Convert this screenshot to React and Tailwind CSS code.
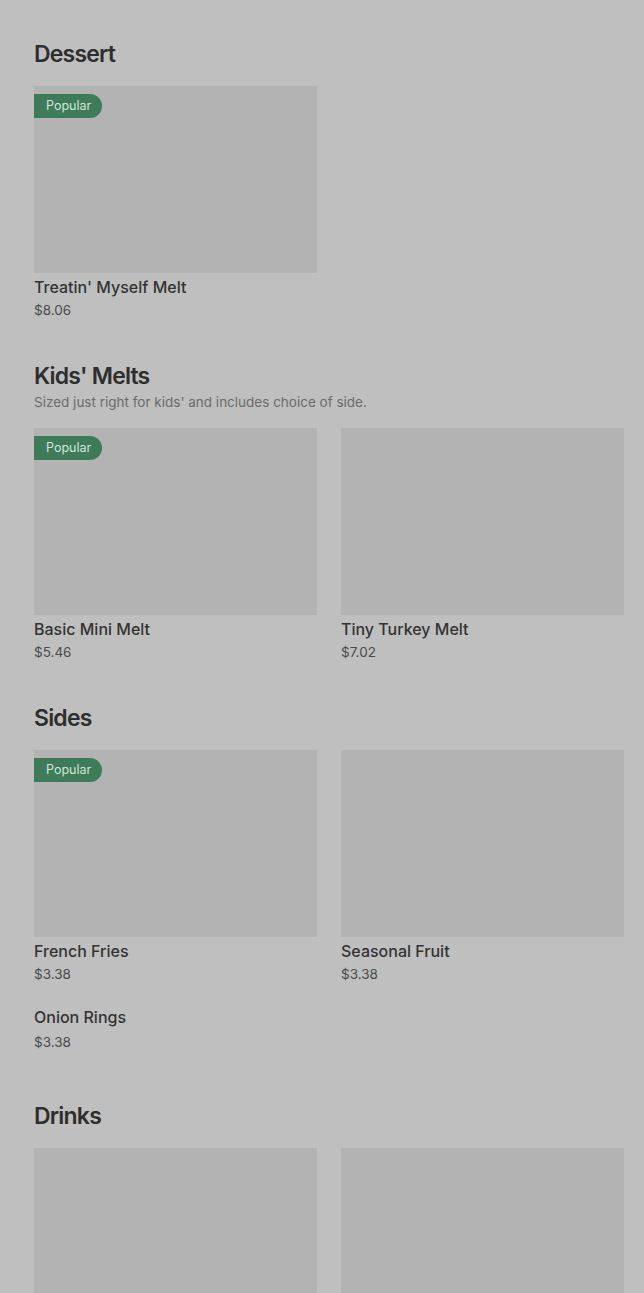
import React from "react";

const sections = [
  {
    title: "Dessert",
    items: [{ name: "Treatin' Myself Melt", price: "$8.06", popular: true, image: true }],
  },
  {
    title: "Kids' Melts",
    desc: "Sized just right for kids' and includes choice of side.",
    items: [
      { name: "Basic Mini Melt", price: "$5.46", popular: true, image: true },
      { name: "Tiny Turkey Melt", price: "$7.02", image: true },
    ],
  },
  {
    title: "Sides",
    items: [
      { name: "French Fries", price: "$3.38", popular: true, image: true },
      { name: "Seasonal Fruit", price: "$3.38", image: true },
      { name: "Onion Rings", price: "$3.38" },
    ],
  },
  {
    title: "Drinks",
    items: [
      { name: "", price: "", image: true },
      { name: "", price: "", image: true },
    ],
  },
];

function Item({ item }) {
  if (!item.image) {
    return (
      <div className="pt-[5px] pb-2">
        <div className="text-[16px] leading-6 font-medium text-[#333333]">{item.name}</div>
        <div className="mt-[3px] text-[13.5px] leading-5 text-[#4a4a4a]">{item.price}</div>
      </div>
    );
  }
  return (
    <div>
      <div className="relative h-[187px] bg-[#b3b3b3]">
        {item.popular && (
          <div className="absolute left-0 top-2 h-6 w-[68px] rounded-r-full bg-[#3d7b59] pl-3 text-[12.5px] leading-6 text-[#d3e6da]">
            Popular
          </div>
        )}
      </div>
      {item.name && (
        <>
          <div className="mt-[2px] text-[16px] leading-6 font-medium text-[#333333]">{item.name}</div>
          <div className="mt-[1px] text-[13.5px] leading-5 text-[#4a4a4a]">{item.price}</div>
        </>
      )}
    </div>
  );
}

export default function App() {
  return (
    <div
      className="min-h-[1293px] bg-[#bfbfbf] pl-[34px] pr-5 pt-[38px]"
      style={{ fontFamily: "Inter, 'Noto Sans', sans-serif" }}
    >
      <div className="flex flex-col gap-[40px]">
        {sections.map((s) => (
          <section key={s.title}>
            <div className="mb-4">
              <h2 className="text-[23px] leading-8 font-semibold tracking-[-0.035em] text-[#2e2e2e]">{s.title}</h2>
              {s.desc && <p className="text-[13.5px] leading-5 text-[#6b6b6b]">{s.desc}</p>}
            </div>
            <div className="grid grid-cols-2 gap-x-6 gap-y-4">
              {s.items.map((it, i) => (
                <Item key={i} item={it} />
              ))}
            </div>
          </section>
        ))}
      </div>
    </div>
  );
}
